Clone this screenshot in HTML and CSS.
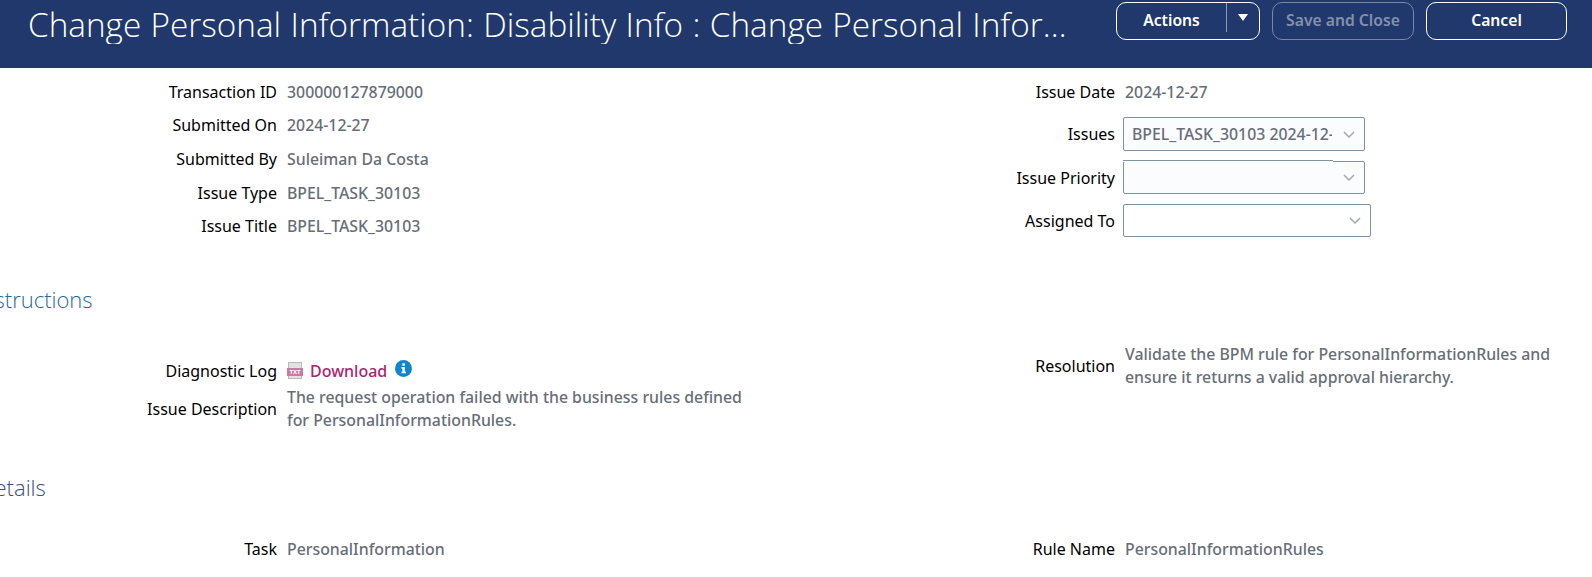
FILE: index.html
```html
<!DOCTYPE html>
<html lang="en">
<head>
    <meta charset="UTF-8">
    <meta name="viewport" content="width=device-width, initial-scale=1.0">
    <title>Change Personal Information</title>
    <link rel="stylesheet" href="styles.css">
</head>
<body>
    <header class="page-header">
        <h1 class="page-title">Change Personal Information: Disability Info : Change Personal Information</h1>
        <div class="header-actions">
            <div class="btn btn-split">
                <span class="btn-main">Actions</span>
                <span class="btn-drop"><span class="btn-caret"></span></span>
            </div>
            <button class="btn btn-disabled">Save and Close</button>
            <button class="btn btn-cancel">Cancel</button>
        </div>
    </header>

    <section class="form-grid form-top">
        <div class="form-col form-col-info">
            <div class="field"><span class="label">Transaction ID</span><span class="value">300000127879000</span></div>
            <div class="field"><span class="label">Submitted On</span><span class="value">2024-12-27</span></div>
            <div class="field"><span class="label">Submitted By</span><span class="value">Suleiman Da Costa</span></div>
            <div class="field"><span class="label">Issue Type</span><span class="value">BPEL_TASK_30103</span></div>
            <div class="field"><span class="label">Issue Title</span><span class="value">BPEL_TASK_30103</span></div>
        </div>
        <div class="form-col">
            <div class="field field-date"><span class="label">Issue Date</span><span class="value">2024-12-27</span></div>
            <div class="field field-input">
                <span class="label">Issues</span>
                <div class="select select-tall">
                    <span class="select-text">BPEL_TASK_30103 2024-12-27</span>
                    <svg class="chevron" viewBox="0 0 12 7"><path d="M1 1l5 5 5-5"/></svg>
                </div>
            </div>
            <div class="field field-input">
                <span class="label">Issue Priority</span>
                <div class="select select-notch">
                    <span class="select-text"></span>
                    <svg class="chevron" viewBox="0 0 12 7"><path d="M1 1l5 5 5-5"/></svg>
                </div>
            </div>
            <div class="field field-input">
                <span class="label">Assigned To</span>
                <div class="select select-wide">
                    <span class="select-text"></span>
                    <svg class="chevron" viewBox="0 0 12 7"><path d="M1 1l5 5 5-5"/></svg>
                </div>
            </div>
        </div>
    </section>

    <h2 class="section-title section-instructions">Instructions</h2>

    <section class="form-grid form-middle">
        <div class="form-col form-col-log">
            <div class="field field-log">
                <span class="label">Diagnostic Log</span>
                <span class="value download">
                    <svg class="txt-icon" viewBox="0 0 16 17">
                        <rect x="1.500" y="0.500" width="13" height="16" fill="#e4e1e3" stroke="#bdb6bb"/>
                        <rect x="0" y="6" width="16" height="8" fill="#c77ba3"/>
                        <text class="txt-icon-label" x="8" y="12.300">TXT</text>
                    </svg>
                    <a class="download-link" href="#">Download</a>
                    <svg class="info-icon" viewBox="0 0 18 18">
                        <circle cx="9" cy="9" r="9" fill="#0f86cc"/>
                        <rect x="7.800" y="3.500" width="2.600" height="2.600" fill="#fff"/>
                        <path d="M6.800 7.500h3.600v5h1.200v1.400H6.800v-1.400h1v-3.600h-1z" fill="#fff"/>
                    </svg>
                </span>
            </div>
            <div class="field field-desc">
                <span class="label">Issue Description</span>
                <span class="value text-block">The request operation failed with the business rules defined for PersonalInformationRules.</span>
            </div>
        </div>
        <div class="form-col">
            <div class="field">
                <span class="label">Resolution</span>
                <span class="value text-block text-wide">Validate the BPM rule for PersonalInformationRules and ensure it returns a valid approval hierarchy.</span>
            </div>
        </div>
    </section>

    <h2 class="section-title section-details">Details</h2>

    <section class="form-grid form-bottom">
        <div class="form-col">
            <div class="field"><span class="label">Task</span><span class="value">PersonalInformation</span></div>
        </div>
        <div class="form-col">
            <div class="field"><span class="label">Rule Name</span><span class="value">PersonalInformationRules</span></div>
        </div>
    </section>
</body>
</html>
```

FILE: styles.css
```css
body {
    font-family: 'Noto Sans', 'Open Sans', sans-serif;
    font-size: 16px;
    margin: 0;
    padding: 0;
    background-color: #fff;
    color: #000;
    overflow: hidden;
}

.page-header {
    display: flex;
    align-items: flex-start;
    justify-content: space-between;
    height: 68px;
    padding: 2px 25px 0 28px;
    box-sizing: border-box;
    background-color: #20386c;
}

.page-title {
    width: 1044px;
    margin: 2px 0 0;
    font-family: 'Open Sans', 'Noto Sans', sans-serif;
    font-size: 33.300px;
    font-weight: 300;
    line-height: 40px;
    word-spacing: 0.700px;
    color: #fff;
    white-space: nowrap;
    overflow: hidden;
    text-overflow: ellipsis;
}

.header-actions {
    display: flex;
    gap: 12px;
}

.btn {
    height: 38px;
    box-sizing: border-box;
    border: 1px solid #fff;
    border-radius: 10px;
    background: none;
    color: #fff;
    font-family: inherit;
    font-size: 15.700px;
    font-weight: 600;
    padding: 0 0 3px;
}

.btn-split {
    display: flex;
    width: 144px;
    padding: 0;
}

.btn-main {
    flex: 1;
    text-align: center;
    line-height: 35px;
}

.btn-drop {
    display: flex;
    justify-content: center;
    width: 32px;
    height: 29px;
    border-left: 1px solid #8f9bb5;
}

.btn-caret {
    margin-top: 11px;
    border-left: 5.500px solid transparent;
    border-right: 5.500px solid transparent;
    border-top: 7px solid #fff;
    height: 0;
}

.btn-disabled {
    width: 142px;
    border-color: #7986a4;
    color: #8390ac;
}

.btn-cancel {
    width: 141px;
}

.form-grid {
    display: grid;
    grid-template-columns: 838px 1fr;
}

.form-col {
    display: flex;
    flex-direction: column;
}

.form-col-info {
    display: grid;
    grid-template-rows: 33px 33px 36px 31px 36px;
    align-content: start;
    padding-top: 1px;
}

.form-col-log {
    padding-top: 12px;
}

.form-top {
    padding-top: 6px;
}

.field {
    display: flex;
    align-items: center;
    min-height: 30px;
}

.label {
    flex: none;
    width: 277px;
    text-align: right;
}

.value {
    margin-left: 10px;
    color: #666e78;
    font-size: 15.850px;
    font-weight: 500;
}

.field-date {
    min-height: 36px;
    margin-bottom: 7px;
}

.field-input {
    margin-bottom: 10px;
}

.select {
    display: flex;
    align-items: center;
    justify-content: space-between;
    width: 242px;
    height: 33px;
    margin-left: 8px;
    padding: 0 9px 0 8px;
    box-sizing: border-box;
    border: 1px solid #7d93a3;
    border-radius: 2px;
    background-color: #fbfcfe;
}

.select-tall {
    height: 34px;
}

.select-wide {
    width: 248px;
    background-color: #fff;
}

/* top border steps down near the right end in the original */
.select-notch {
    position: relative;
}

.select-notch::before {
    content: '';
    position: absolute;
    left: -1px;
    top: -2px;
    width: 210px;
    height: 1px;
    background-color: #7d93a3;
}

.select-notch::after {
    content: '';
    position: absolute;
    left: 0;
    top: -1px;
    width: 209px;
    height: 1px;
    background-color: #fbfcfe;
}

.select-text {
    width: 200px;
    overflow: hidden;
    white-space: nowrap;
    color: #666e78;
    font-size: 15.850px;
    font-weight: 500;
}

.chevron {
    flex: none;
    width: 12px;
    height: 7px;
    fill: none;
    stroke: #a3a9ae;
    stroke-width: 1.500;
}

.section-title {
    margin: 0;
    font-family: 'Open Sans', 'Noto Sans', sans-serif;
    font-size: 22px;
    font-weight: 300;
    line-height: 28px;
}

.section-instructions {
    margin: 38px 0 0 -24px;
    color: #1f6c96;
}

.section-details {
    margin: 41px 0 0 -21px;
    color: #3a4f86;
}

.form-middle {
    padding-top: 30px;
}

.form-bottom {
    padding-top: 33px;
}

.field-log {
    min-height: 31px;
}

.download {
    display: flex;
    align-items: center;
}

.txt-icon {
    width: 16px;
    height: 17px;
}

.txt-icon-label {
    fill: #fff;
    font-size: 6px;
    font-weight: 700;
    text-anchor: middle;
}

.download-link {
    margin: 1px 0 0 7px;
    color: #a8266f;
    font-size: 16px;
    text-decoration: none;
}

.info-icon {
    width: 17px;
    height: 17px;
    margin: -5px 0 0 8px;
}

.text-block {
    width: 470px;
    line-height: 23px;
}

.text-wide {
    width: 450px;
}
```
